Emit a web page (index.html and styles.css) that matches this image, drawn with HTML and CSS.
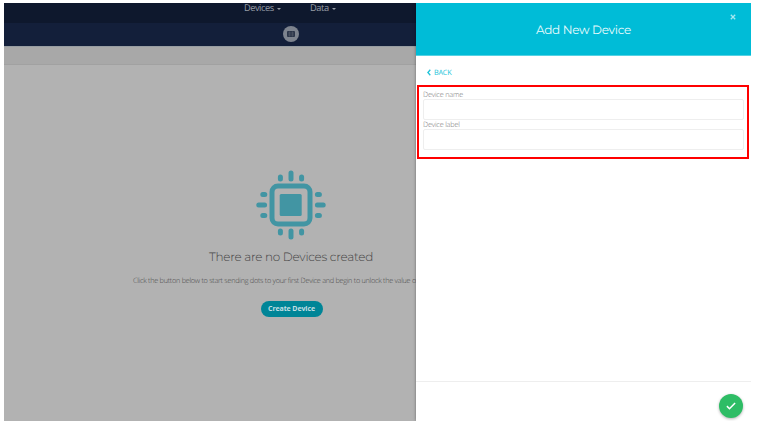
FILE: index.html
```html
<!DOCTYPE html>
<html lang="en">
<head>
<meta charset="utf-8">
<title>Add New Device</title>
<link rel="stylesheet" href="styles.css">
</head>
<body>
<div class="app">
  <div class="page">
    <div class="canvas">
      <nav class="topnav">
        <span class="nav-item nav-devices">Devices<i class="caret"></i></span>
        <span class="nav-item nav-data">Data<i class="caret"></i></span>
      </nav>
      <div class="subnav">
        <span class="grid-button">
          <svg width="8" height="6" viewBox="0 0 8 6"><rect width="8" height="6" rx="1" fill="#2b3549"/><path d="M2.5 .5v5M5.5 .5v5M.8 2h6.4M.8 4h6.4" stroke="#59616f" stroke-width=".5"/></svg>
        </span>
      </div>
      <div class="toolbar"></div>
      <main class="empty">
        <svg class="chip" width="70" height="70" viewBox="0 0 70 70">
          <rect x="16" y="16" width="38" height="38" rx="6" fill="none" stroke="#4295a3" stroke-width="5"/>
          <rect x="23.7" y="24" width="22" height="22" rx="1.5" fill="#4295a3"/>
          <g stroke="#4295a3" stroke-width="5" stroke-linecap="round">
            <path d="M35 3v6M24.4 7v2M45.6 7v2M35 61v6M24.4 61v2M45.6 61v2"/>
            <path d="M2.8 35h5.8M6.8 24.6h2M6.8 45.5h2M61.4 35h5.8M61.4 24.6h2M61.4 45.5h2"/>
          </g>
        </svg>
        <h1 class="empty-title">There are no Devices created</h1>
        <p class="empty-text">Click the button below to start sending dots to your first Device and begin to unlock the value of your data.</p>
        <button class="create">Create Device</button>
      </main>
    </div>
  </div>
  <aside class="drawer">
    <header class="drawer-head">
      <h2 class="drawer-title">Add New Device</h2>
      <svg class="close" width="6" height="6" viewBox="0 0 6 6"><path d="M.8.8l4.4 4.4M5.2.8L.8 5.2" stroke="#a6e8f0" stroke-width="1.3"/></svg>
    </header>
    <div class="drawer-body">
      <a class="back"><svg width="4" height="7" viewBox="0 0 4 7"><path d="M3.3.8L.9 3.5l2.4 2.7" fill="none" stroke="#22c4d9" stroke-width="1.3"/></svg><span class="back-text">BACK</span></a>
      <form class="fields">
        <label class="label label-name" for="name">Device name</label>
        <input class="input" id="name">
        <label class="label label-id" for="label">Device label</label>
        <input class="input" id="label">
      </form>
    </div>
    <footer class="drawer-foot">
      <span class="confirm"><svg width="10" height="8" viewBox="0 0 10 8"><path d="M.9 4.1l2.6 2.6L9.1.9" fill="none" stroke="#fff" stroke-width="1.5"/></svg></span>
    </footer>
  </aside>
</div>
</body>
</html>
```
FILE: styles.css
```css
* { box-sizing: border-box; }
body { margin: 0; padding: 3px 6px 6px 4px; background: #fff; font-family: "Open Sans", sans-serif; text-rendering: geometricPrecision; }
.app { display: grid; grid-template-columns: 412px 335px; height: 418px; }
.page { overflow: hidden; background: #b2b2b2; }
.canvas { width: 574px; height: 418px; display: flex; flex-direction: column; }
.topnav { height: 20px; flex: none; display: flex; background: #0e182d; color: #979da6; font-size: 9.3px; line-height: 10px; }
.nav-item { height: 10px; display: flex; align-items: center; white-space: nowrap; }
.nav-devices { margin-left: 240px; width: 66px; letter-spacing: -.5px; }
.nav-data { letter-spacing: -.45px; }
.caret { margin: 1px 0 0 3px; border: 2px solid transparent; border-top-color: #979da6; border-bottom: 0; }
.subnav { height: 23px; flex: none; display: flex; align-items: center; justify-content: center; background: #131f3a; }
.grid-button { width: 16px; height: 16px; margin-top: -1px; border-radius: 50%; background: #7d838e; display: flex; align-items: center; justify-content: center; }
.toolbar { height: 19px; flex: none; background: #a8a8a8; border-top: 1px solid #979da2; border-bottom: 1px solid #a1a1a1; }
.empty { display: flex; flex-direction: column; align-items: center; padding-top: 105px; }
.chip { display: block; margin-left: .6px; }
.empty-title { margin: 9px 0 0; font-family: Montserrat, Inter, sans-serif; font-size: 12px; line-height: 18px; font-weight: 300; letter-spacing: -.25px; color: #444; white-space: nowrap; }
.empty-text { margin: 9px 0 0; width: 316px; font-size: 7.3px; line-height: 10px; font-weight: 300; letter-spacing: -.28px; color: #4c4c4c; white-space: nowrap; }
.create { margin: 15px 0 0 1px; padding: 0; width: 62px; height: 16px; border: 0; border-radius: 8px; background: #008597; color: #c4dfe3; font: 700 7px/16px "Open Sans", sans-serif; letter-spacing: -.1px; }
.drawer { background: #fff; display: flex; flex-direction: column; box-shadow: 0 0 3px rgba(0,0,0,.4); clip-path: inset(0 0 0 -4px); }
.drawer-head { height: 53px; flex: none; position: relative; display: flex; align-items: center; justify-content: center; background: #00bcd7; border-bottom: 1px solid #55d2e3; }
.drawer-title { margin: 3px 0 0; font-family: Montserrat, Inter, sans-serif; font-size: 12px; line-height: 16px; font-weight: 400; letter-spacing: -.3px; color: #e9fbfd; }
.close { position: absolute; top: 11px; right: 15px; }
.drawer-body { flex: 1; }
.back { display: flex; align-items: center; gap: 3px; height: 10px; margin: 12px 0 0 11px; color: #22c4d9; font-size: 7.3px; line-height: 10px; letter-spacing: -.25px; }
.back svg { margin-top: -1px; }
.fields { margin: 7px 2px 0 1px; height: 74px; border: 2px solid #f00; padding: 3px 3px 0 4px; display: flex; flex-direction: column; }
.label { height: 9px; color: #777; font-size: 7.3px; font-weight: 300; line-height: 10px; letter-spacing: -.2px; }
.input { display: block; width: 100%; height: 21px; border: 1px solid #eee; border-radius: 2px; padding: 0 4px; background: #fff; outline: 0; font: 7px "Open Sans", sans-serif; }
.label-id { line-height: 11px; }
.drawer-foot { height: 40px; flex: none; border-top: 1px solid #eee; display: flex; justify-content: flex-end; padding: 12px 8px 0 0; }
.confirm { width: 24px; height: 24px; border-radius: 50%; background: #2ebd65; display: flex; align-items: center; justify-content: center; box-shadow: 0 1px 3px rgba(0,0,0,.3); }
```
